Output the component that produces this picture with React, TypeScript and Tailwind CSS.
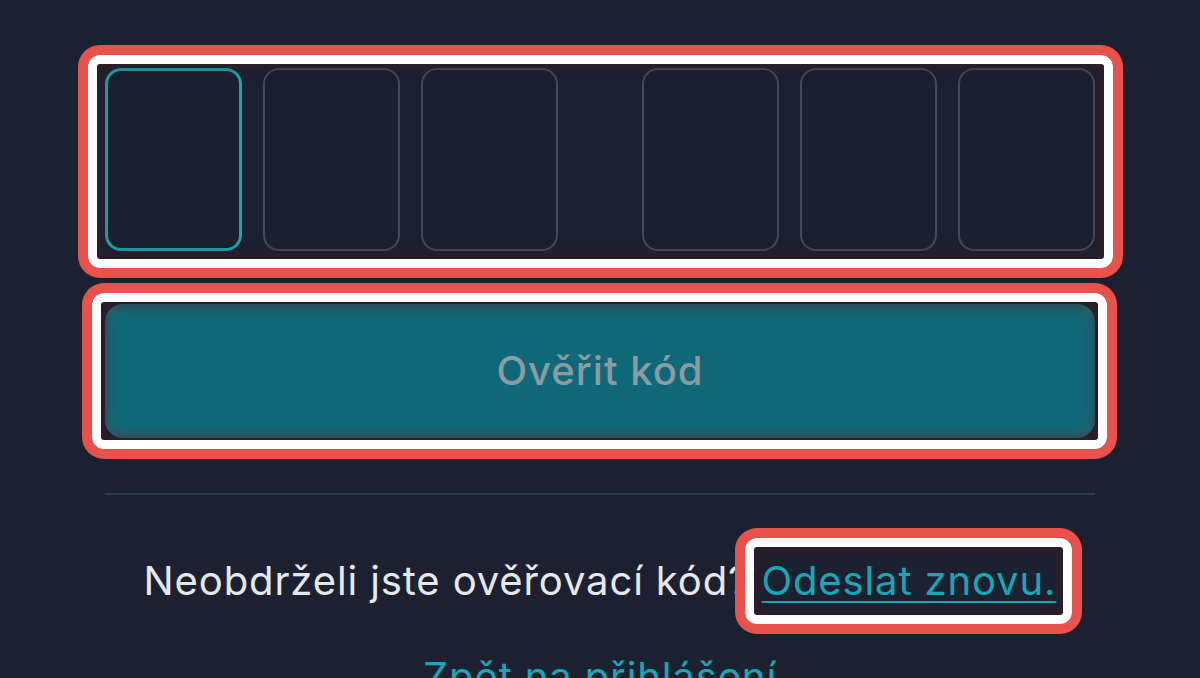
import React from "react";

const Highlight = ({ className }: { className: string }) => (
  <div
    className={`pointer-events-none absolute rounded-[12px] border-[9px] border-white shadow-[0_0_0_10px_#e8524a,inset_0_0_14px_rgba(70,25,35,0.85)] ${className}`}
  />
);

const OtpBox = ({ active }: { active?: boolean }) => (
  <div
    className={`h-[183px] w-[137px] rounded-[16px] bg-[#19202e] ${
      active ? "border-[3px] border-[#1ba3b0]" : "border-2 border-[#474a57]"
    }`}
  />
);

export default function App() {
  return (
    <div className="h-[678px] w-[1200px] overflow-hidden bg-[#1b2130] font-['Inter',sans-serif]">
      <div className="mx-auto flex w-[990px] flex-col pt-[68px]">
        {/* code inputs */}
        <div className="relative flex items-center justify-between">
          <div className="flex gap-[21px]">
            <OtpBox active />
            <OtpBox />
            <OtpBox />
          </div>
          <div className="flex gap-[21px]">
            <OtpBox />
            <OtpBox />
            <OtpBox />
          </div>
          <Highlight className="-left-[17px] -right-[18px] -top-[13px] -bottom-[17px]" />
        </div>

        {/* submit */}
        <div className="relative mt-[53px]">
          <button className="flex h-[134px] w-full items-center justify-center rounded-[18px] bg-[#0f6878] text-[40px] font-medium tracking-[0.025em] text-[#8c9ba0] shadow-[inset_0_0_18px_rgba(70,95,100,0.75)]">
            Ověřit kód
          </button>
          <Highlight className="-left-[13px] -right-[12px] -top-[11px] -bottom-[11px]" />
        </div>

        <div className="mt-[55px] h-[2px] w-full bg-[#2c3946]" />

        <p className="mt-[56px] text-center text-[40px] leading-[60px] tracking-[0.022em] text-[#e6e8ec]">
          Neobdrželi jste ověřovací kód?{" "}
          <span className="relative inline-block">
            <a href="#" className="text-[#17a7b6] underline decoration-2 underline-offset-[6px]">
              Odeslat znovu.
            </a>
            <Highlight className="-left-[16px] -right-[16px] -top-[13px] -bottom-[13px]" />
          </span>
        </p>

        <a href="#" className="mt-[36px] text-center text-[40px] leading-[60px] tracking-[0.022em] text-[#17a7b6]">
          Zpět na přihlášení
        </a>
      </div>
    </div>
  );
}
